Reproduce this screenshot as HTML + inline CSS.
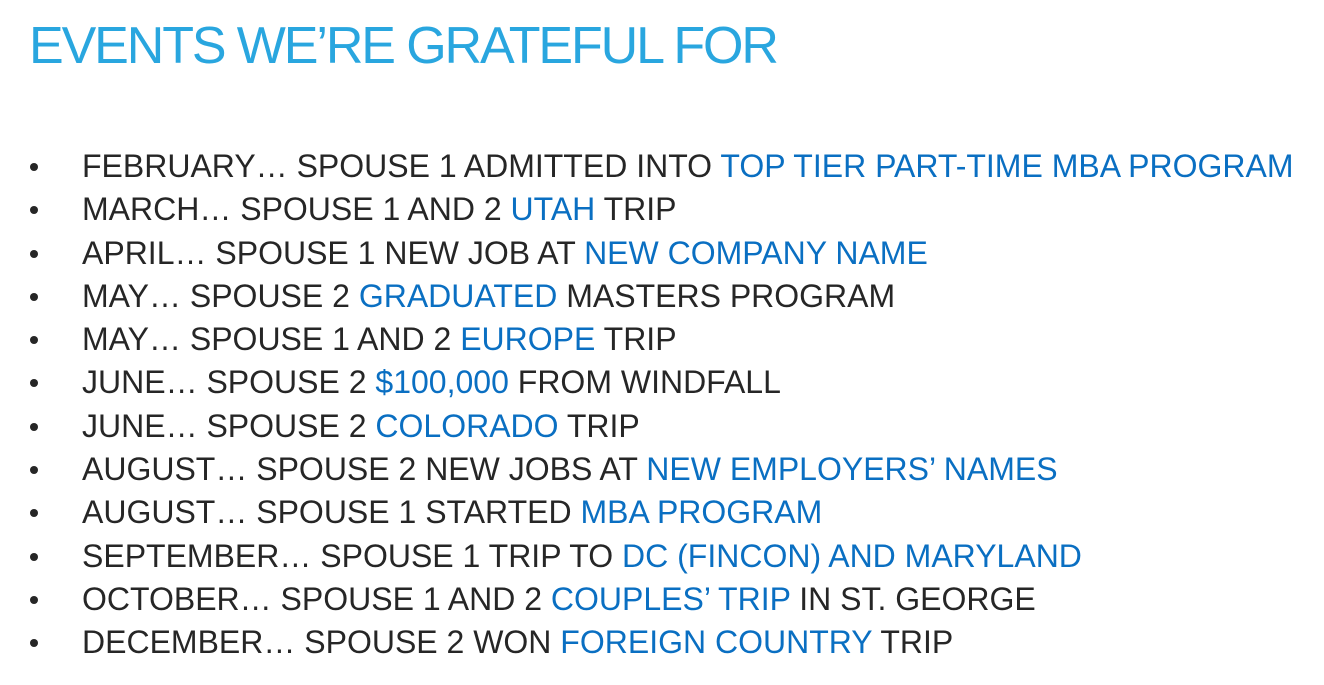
<!DOCTYPE html>
<html><head><meta charset="utf-8"><style>
html,body{margin:0;padding:0;background:#fff;}
body{width:1324px;height:685px;position:relative;overflow:hidden;font-family:"Liberation Sans",sans-serif;}
h1{position:absolute;left:29px;top:16px;margin:0;font-weight:normal;font-size:52px;letter-spacing:-2.1px;color:#29a6df;line-height:60px;white-space:nowrap;}
ul{position:absolute;left:0;top:145px;margin:0;padding:0;list-style:none;}
li{position:relative;height:43.3px;line-height:43.3px;font-size:32px;letter-spacing:0px;color:#262626;padding-left:82px;white-space:nowrap;}
li:before{content:"";position:absolute;left:30px;top:18px;width:8px;height:8px;border-radius:50%;background:#262626;}
b{font-weight:normal;color:#0a6fc2;}
</style></head><body>
<h1>EVENTS WE’RE GRATEFUL FOR</h1>
<ul>
<li>FEBRUARY… SPOUSE 1 ADMITTED INTO <b>TOP TIER PART-TIME MBA PROGRAM</b></li>
<li>MARCH… SPOUSE 1 AND 2 <b>UTAH</b> TRIP</li>
<li>APRIL… SPOUSE 1 NEW JOB AT <b>NEW COMPANY NAME</b></li>
<li>MAY… SPOUSE 2 <b>GRADUATED</b> MASTERS PROGRAM</li>
<li>MAY… SPOUSE 1 AND 2 <b>EUROPE</b> TRIP</li>
<li>JUNE… SPOUSE 2 <b>$100,000</b> FROM WINDFALL</li>
<li>JUNE… SPOUSE 2 <b>COLORADO</b> TRIP</li>
<li>AUGUST… SPOUSE 2 NEW JOBS AT <b>NEW EMPLOYERS’ NAMES</b></li>
<li>AUGUST… SPOUSE 1 STARTED <b>MBA PROGRAM</b></li>
<li>SEPTEMBER… SPOUSE 1 TRIP TO <b>DC (FINCON) AND MARYLAND</b></li>
<li>OCTOBER… SPOUSE 1 AND 2 <b>COUPLES’ TRIP</b> IN ST. GEORGE</li>
<li>DECEMBER… SPOUSE 2 WON <b>FOREIGN COUNTRY</b> TRIP</li>
</ul>
</body></html>
